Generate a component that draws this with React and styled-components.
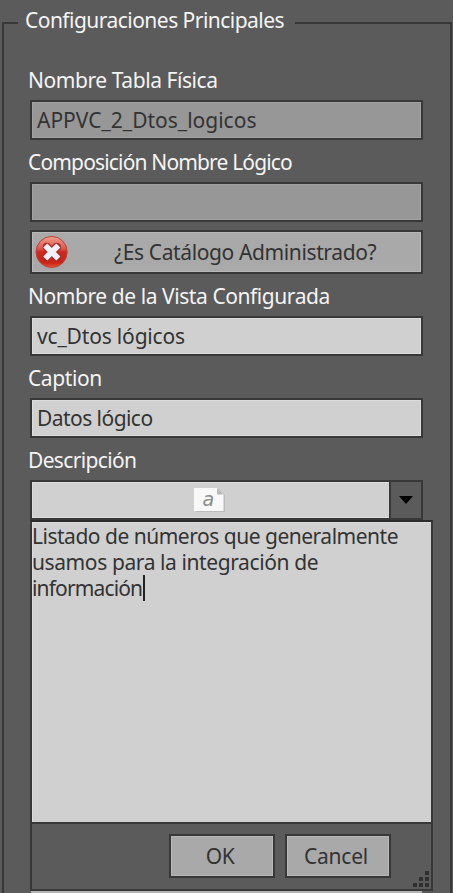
import React from "react";
import styled, { createGlobalStyle } from "styled-components";

const edge = "#383838";

const GlobalStyle = createGlobalStyle`
  * { box-sizing: border-box; }
  body {
    margin: 0;
    background: #5b5b5b;
    overflow: hidden;
    font-family: "Noto Sans", "Open Sans", sans-serif;
    font-size: 21px;
    color: #333;
  }
`;

const Page = styled.main`
  height: 893px;
  padding: 0 1px 0 2px;
  overflow: hidden;
`;

const Group = styled.section`
  height: 893px;
  display: grid;
  grid-template-columns: minmax(0, 1fr);
  grid-template-rows: 58px minmax(0, 1fr);
`;

const Legend = styled.header`
  display: flex;
  align-items: flex-start;
  height: 58px;
`;

const Rule = styled.span`
  width: ${(p) => p.$width || "auto"};
  flex: ${(p) => (p.$width ? "none" : 1)};
  height: 36px;
  margin-top: 22px;
  border-top: 2px solid ${edge};
  border-left: ${(p) => (p.$side === "left" ? `2px solid ${edge}` : "none")};
  border-right: ${(p) => (p.$side === "right" ? `2px solid ${edge}` : "none")};
`;

const Title = styled.h1`
  width: 277px;
  margin: 0;
  padding: 5px 0 0 7px;
  font-size: 21px;
  font-weight: 400;
  line-height: 30px;
  color: #f4f4f4;
  white-space: nowrap;
`;

const Body = styled.div`
  display: flex;
  flex-direction: column;
  padding: 0 0 0 26px;
  border: solid ${edge};
  border-width: 0 2px;
`;

const Text = styled.span`
  letter-spacing: ${(p) => p.$track || 0}px;
  white-space: nowrap;
`;

const Label = styled.label`
  flex: none;
  height: 42px;
  padding-top: 7px;
  line-height: 30px;
  margin-left: -2px;
  color: #f4f4f4;
`;

const Field = styled.div`
  flex: none;
  display: flex;
  align-items: center;
  width: 393px;
  height: 40px;
  padding-left: 5px;
  border: 2px solid ${edge};
  background: ${(p) => (p.$disabled ? "#979797" : "#d0d0d0")};
  box-shadow: inset 0 0 0 1px ${(p) => (p.$disabled ? "#a1a1a1" : "#dcdcdc")};
  line-height: 30px;
`;

const Button = styled.button`
  flex: none;
  display: flex;
  align-items: center;
  justify-content: center;
  width: ${(p) => p.$width}px;
  height: 44px;
  padding: 0 4px 0 0;
  border: 2px solid ${edge};
  background: #a9a9a9;
  box-shadow: inset 0 0 0 1px #b8b8b8;
  font: inherit;
  line-height: 30px;
  color: #333;
`;

const Toggle = styled(Button)`
  justify-content: flex-start;
  gap: 45px;
  margin-top: 8px;
  padding-left: 3px;
`;

const Combo = styled(Field)`
  padding: 0;
  line-height: 0;
`;

const ComboValue = styled.div`
  flex: 1;
  padding-left: 161px;
`;

const Arrow = styled.div`
  display: flex;
  align-items: center;
  justify-content: center;
  width: 32px;
  height: 36px;
  border-left: 2px solid ${edge};
  background: #5b5b5b;
`;

const Popup = styled.div`
  flex: none;
  width: 403px;
  height: 371px;
  border: 2px solid ${edge};
  border-top-color: #2b2b2b;
  background: #5b5b5b;
`;

const Memo = styled.div`
  height: 302px;
  padding-top: 1px;
  border-bottom: 2px solid ${edge};
  background: #d0d0d0;
  box-shadow: inset 1px 1px 0 #dcdcdc;
`;

const Line = styled.div`
  display: flex;
  align-items: center;
  height: 26px;
  line-height: 26px;
`;

const Caret = styled.i`
  width: 2px;
  height: 26px;
  margin-left: 1px;
  background: #222;
`;

const Footer = styled.footer`
  display: flex;
  gap: 10px;
  padding: 10px 0 0 137px;
`;

const Grip = styled.svg`
  align-self: flex-end;
  margin: 0 0 -9px 10px;
`;

const NextField = styled.div`
  flex: none;
  width: 391px;
  height: 2px;
  margin-left: 1px;
  background: #b4b4b4;
`;

function ErrorIcon() {
  return (
    <svg width="34" height="34" viewBox="0 0 34 34">
      <defs>
        <linearGradient id="red" x1="0" y1="0" x2="0" y2="1">
          <stop offset="0" stopColor="#f0a092" />
          <stop offset=".4" stopColor="#dc5448" />
          <stop offset=".5" stopColor="#cb2920" />
          <stop offset=".85" stopColor="#c92518" />
          <stop offset="1" stopColor="#e6583c" />
        </linearGradient>
      </defs>
      <circle cx="16.6" cy="17" r="15.6" fill="url(#red)" stroke="#bd4238" strokeWidth="1" />
      <path d="M11.8 12 21.8 22M21.8 12 11.8 22" stroke="#a92a28" strokeWidth="8.5" strokeLinecap="round" />
      <path d="M12.3 12.5 21.3 21.5M21.3 12.5 12.3 21.5" stroke="#eef1f8" strokeWidth="5.8" strokeLinecap="square" />
    </svg>
  );
}

const Glyph = styled.text`
  font: italic 19px "DejaVu Sans", sans-serif;
  fill: #8c8c8c;
`;

function TextIcon() {
  return (
    <svg width="34" height="28" viewBox="0 0 34 28">
      <path d="M3 3H26L32 9V26H3Z" fill="#bcbcbc" />
      <path d="M1 2H24L30.5 8.5V25H1Z" fill="#f8f8f8" />
      <path d="M24 2V8.5H30.5Z" fill="#b9b9b9" />
      <Glyph x="9.5" y="19.5">a</Glyph>
    </svg>
  );
}

const dots = [[14, 0], [8, 6], [14, 6], [2, 12], [8, 12], [14, 12]];

function Input({ label, value, disabled, track, labelTrack }) {
  return (
    <>
      <Label><Text $track={labelTrack}>{label}</Text></Label>
      <Field $disabled={disabled}><Text $track={track}>{value}</Text></Field>
    </>
  );
}

export default function App() {
  return (
    <>
      <GlobalStyle />
      <Page>
        <Group>
          <Legend>
            <Rule $width="16px" $side="left" />
            <Title><Text $track={-0.53}>Configuraciones Principales</Text></Title>
            <Rule $side="right" />
          </Legend>
          <Body>
            <Input label="Nombre Tabla Física" labelTrack={-0.43} value="APPVC_2_Dtos_logicos" disabled />
            <Input label="Composición Nombre Lógico" labelTrack={-0.84} value="" disabled />
            <Toggle $width={393}>
              <ErrorIcon />
              <Text $track={-0.38}>¿Es Catálogo Administrado?</Text>
            </Toggle>
            <Input label="Nombre de la Vista Configurada" labelTrack={-0.43} value="vc_Dtos lógicos" track={-0.17} />
            <Input label="Caption" labelTrack={-0.4} value="Datos lógico" track={-0.55} />
            <Label><Text $track={-0.65}>Descripción</Text></Label>
            <Combo>
              <ComboValue><TextIcon /></ComboValue>
              <Arrow>
                <svg width="14" height="9" viewBox="0 0 14 9"><path d="M0 0H14L7 8Z" fill="#000" /></svg>
              </Arrow>
            </Combo>
            <Popup>
              <Memo>
                <Line><Text $track={-0.49}>Listado de números que generalmente</Text></Line>
                <Line><Text $track={-0.4}>usamos para la integración de</Text></Line>
                <Line><Text $track={-0.85}>información</Text><Caret /></Line>
              </Memo>
              <Footer>
                <Button $width={106}><Text $track={-0.5}>OK</Text></Button>
                <Button $width={106}><Text $track={-0.2}>Cancel</Text></Button>
                <Grip width="18" height="16" viewBox="0 0 18 16">
                  {dots.map(([x, y]) => <rect key={`${x}-${y}`} x={x} y={y} width="4" height="4" fill="#303030" />)}
                </Grip>
              </Footer>
            </Popup>
            <NextField />
          </Body>
        </Group>
      </Page>
    </>
  );
}
